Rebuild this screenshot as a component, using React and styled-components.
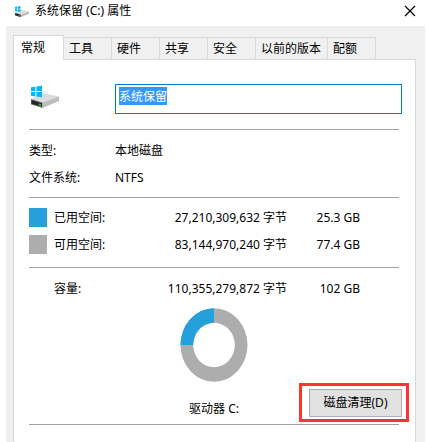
import React, { useEffect, useRef } from 'react';
import styled, { createGlobalStyle } from 'styled-components';

const GlobalStyle = createGlobalStyle`
  * {
    box-sizing: border-box;
  }

  body {
    margin: 0;
    background: #fff;
    color: #000;
    font-family: "Noto Sans", "Noto Sans CJK SC", sans-serif;
    font-size: 12px;
    line-height: 18px;
  }
`

const Window = styled.div`
  min-height: 100vh;
  display: flex;
  flex-direction: column;
`

const TitleBar = styled.header`
  height: 26px;
  padding: 0 10px 4px 14px;
  display: flex;
  align-items: center;
  gap: 6px;
`

const Title = styled.h1`
  margin: 0;
  flex: 1;
  font-size: 12px;
  font-weight: 400;
`

const CloseButton = styled.button`
  padding: 0;
  border: none;
  background: none;
  display: flex;
`

const Body = styled.div`
  flex: 1;
  margin: 0 1px 0 6px;
  padding: 9px 9px 0 7px;
  background: #f0f0f0;
  display: flex;
  flex-direction: column;
`

const Tabs = styled.div`
  display: flex;
  align-items: flex-end;
`

const Tab = styled.button`
  height: ${props => props.$active ? '25px' : '22px'};
  min-width: ${props => props.$active ? '51px' : '48px'};
  padding: ${props => props.$active ? '0 7px 1px' : '0 6px 0 5px'};
  margin-bottom: ${props => props.$active ? '-1px' : '0'};
  border: 1px solid #d9d9d9;
  border-left-width: ${props => props.$active ? '1px' : '0'};
  border-bottom: none;
  background: ${props => props.$active ? '#fff' : '#f0f0f0'};
  color: #000;
  font: inherit;
  text-align: left;
  white-space: nowrap;
  position: relative;
`

const Panel = styled.main`
  flex: 1;
  padding: 24px 16px 0 15px;
  border: 1px solid #d9d9d9;
  border-bottom: none;
  background: #fff;
`

const NameRow = styled.div`
  display: flex;
  align-items: flex-start;
  margin: 0 -3px 15px 0;
`

const IconCell = styled.div`
  width: 86px;
  flex: none;
`

const NameInput = styled.input`
  flex: 1;
  min-width: 0;
  height: 30px;
  padding: 0 3px 6px;
  border: 1px solid #0078d7;
  outline: none;
  color: #000;
  font: inherit;

  &::selection {
    background: #3399ff;
    color: #fff;
  }
`

const Divider = styled.hr`
  height: 1px;
  margin: 0;
  border: none;
  background: #a0a0a0;
`

const Details = styled.dl`
  margin: 0;
  padding: 12px 0 10px;
  display: grid;
  grid-template-columns: 86px 1fr;
  row-gap: 9px;
`

const Term = styled.dt`
  margin: 0;
`

const Value = styled.dd`
  margin: 0;
`

const Usage = styled.table`
  width: 100%;
  border-collapse: collapse;
  table-layout: fixed;
  margin: ${props => props.$margin};

  td, th {
    height: 27px;
    padding: 0;
    font-weight: 400;
    text-align: left;
    white-space: nowrap;
  }
`

const Column = styled.col`
  width: ${props => props.$width};
`

const Amount = styled.td`
  && {
    text-align: right;
  }
`

const Swatch = styled.div`
  width: 18px;
  height: 19px;
  background: ${props => props.$color};
`

const Chart = styled.div`
  display: flex;
  justify-content: center;
`

const Footer = styled.div`
  display: grid;
  grid-template-columns: 1fr auto 1fr;
  align-items: end;
  margin: 1px 0 2px;
`

const DriveLabel = styled.span`
  grid-column: 2;
  padding-bottom: 4px;
`

const Highlight = styled.div`
  justify-self: end;
  margin-right: -10px;
  padding: 3px 4px 2px 7px;
  border: 3px solid #ff3333;
`

const CleanupButton = styled.button`
  display: block;
  width: 93px;
  height: 28px;
  padding: 0;
  border: 1px solid #adadad;
  background: #e1e1e1;
  color: #000;
  font: inherit;
`

const tabs = ['常规', '工具', '硬件', '共享', '安全', '以前的版本', '配额'];

const usage = [
  { label: '已用空间:', bytes: '27,210,309,632 字节', size: '25.3 GB', color: '#26a0da' },
  { label: '可用空间:', bytes: '83,144,970,240 字节', size: '77.4 GB', color: '#adadad' },
];

const total = [
  { label: '容量:', bytes: '110,355,279,872 字节', size: '102 GB' },
];

const DriveIcon = ({ width, height }) => (
  <svg width={width} height={height} viewBox="0 0 30 25" aria-hidden="true">
    <path d="M2 15 L14 9 L30 12.5 L13.5 18.5 Z" fill="#dcdcdc" />
    <path d="M13.5 18.5 L30 12.5 V17 L13.5 24 Z" fill="#bdbdbd" />
    <path d="M2 15 L13.5 18.5 V24 L2 20.5 Z" fill="#777" />
    <path d="M2.5 16 L13 19.2 V22.8 L2.5 19.8 Z" fill="#262626" />
    <path d="M9.5 19.4 L12 20.1 V22 L9.5 21.3 Z" fill="#2fb53f" />
    <path d="M2 3.3 L6.4 2.7 V7 H2 Z M7.4 2.5 L13 1.7 V7 H7.4 Z M2 8 H6.4 V12.4 L2 11.8 Z M7.4 8 H13 V13.3 L7.4 12.5 Z" fill="#00b9f2" />
  </svg>
)

const UsageTable = ({ rows, margin }) => (
  <Usage $margin={margin}>
    <colgroup>
      <Column $width="25px" />
      <Column $width="83px" />
      <Column $width="150px" />
      <Column $width="73px" />
      <Column $width="auto" />
    </colgroup>
    <tbody>
      {rows.map(row => (
        <tr key={row.label}>
          <td>{row.color && <Swatch $color={row.color} />}</td>
          <th scope="row">{row.label}</th>
          <Amount>{row.bytes}</Amount>
          <Amount>{row.size}</Amount>
          <td />
        </tr>
      ))}
    </tbody>
  </Usage>
)

const App = () => {
  const nameRef = useRef(null);

  useEffect(() => {
    nameRef.current.focus();
    nameRef.current.select();
  }, []);

  return (
    <>
      <GlobalStyle />
      <Window>
        <TitleBar>
          <DriveIcon width={15} height={13} />
          <Title>系统保留 (C:) 属性</Title>
          <CloseButton aria-label="关闭">
            <svg width="12" height="12" viewBox="0 0 12 12" stroke="#000" strokeWidth="1.2">
              <path d="M1 1 L11 11 M11 1 L1 11" />
            </svg>
          </CloseButton>
        </TitleBar>
        <Body>
          <Tabs role="tablist">
            {tabs.map((tab, i) => (
              <Tab key={tab} role="tab" aria-selected={i === 0} $active={i === 0}>
                {tab}
              </Tab>
            ))}
          </Tabs>
          <Panel>
            <NameRow>
              <IconCell>
                <DriveIcon width={30} height={25} />
              </IconCell>
              <NameInput ref={nameRef} aria-label="卷标" defaultValue="系统保留" />
            </NameRow>
            <Divider />
            <Details>
              <Term>类型:</Term>
              <Value>本地磁盘</Value>
              <Term>文件系统:</Term>
              <Value>NTFS</Value>
            </Details>
            <Divider />
            <UsageTable rows={usage} margin="6px 0 9px" />
            <Divider />
            <UsageTable rows={total} margin="7px 0 6px" />
            <Chart>
              <svg width="68" height="74" viewBox="0 0 68 74" role="img" aria-label="容量">
                <path d="M0.5 37 A33.5 36.7 0 0 1 67.5 37 A33.5 36.7 0 0 1 0.5 37 Z M13.2 37 A20.8 22.3 0 0 0 54.8 37 A20.8 22.3 0 0 0 13.2 37 Z" fill="#adadad" fillRule="evenodd" />
                <path d="M0.5 37 A33.5 36.7 0 0 1 34 0.3 V14.7 A20.8 22.3 0 0 0 13.2 37 Z" fill="#26a0da" />
              </svg>
            </Chart>
            <Footer>
              <DriveLabel>驱动器 C:</DriveLabel>
              <Highlight>
                <CleanupButton>磁盘清理(D)</CleanupButton>
              </Highlight>
            </Footer>
            <Divider />
          </Panel>
        </Body>
      </Window>
    </>
  )
}

export default App;
